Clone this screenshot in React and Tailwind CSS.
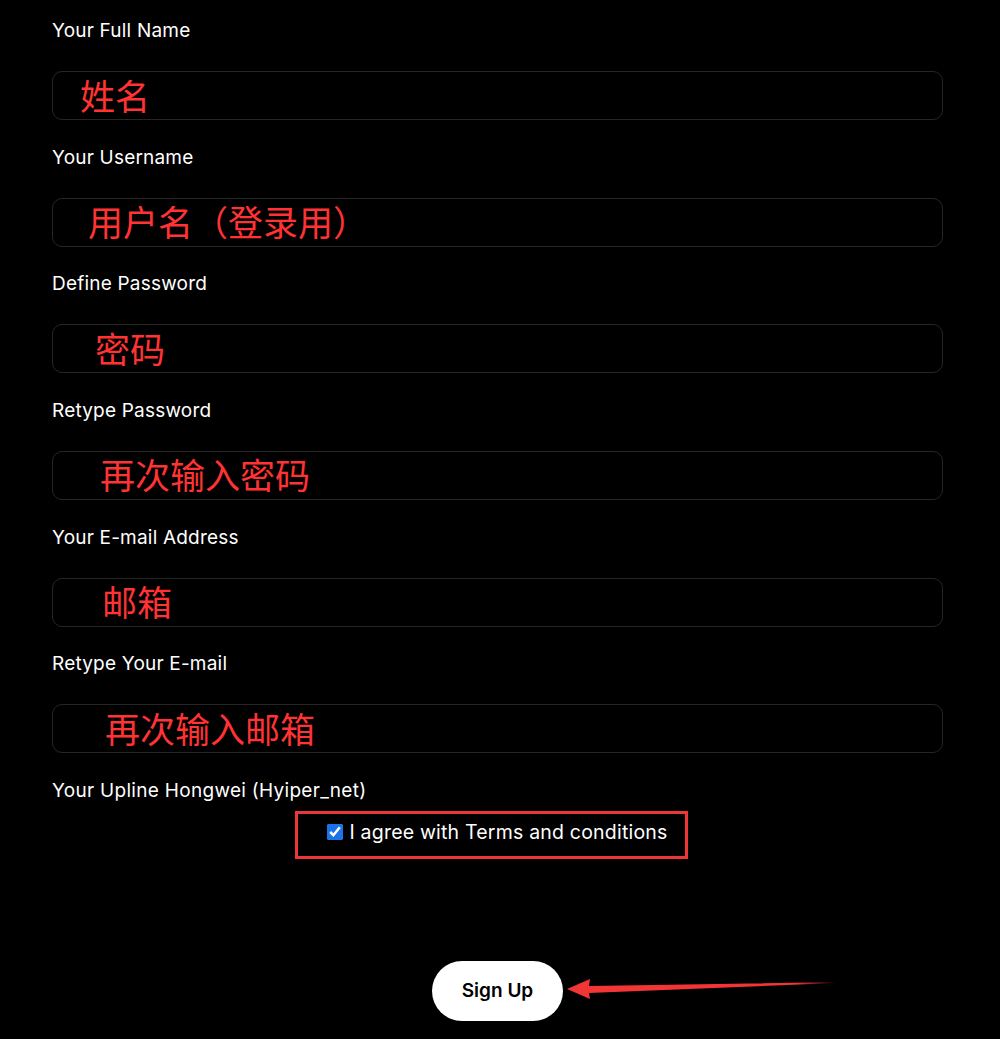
import React from 'react';

const fields = [
  { label: 'Your Full Name', hint: '姓名', indent: 'pl-[27px]' },
  { label: 'Your Username', hint: '用户名（登录用）', indent: 'pl-[35px]' },
  { label: 'Define Password', hint: '密码', indent: 'pl-[42px]' },
  { label: 'Retype Password', hint: '再次输入密码', indent: 'pl-[47px]' },
  { label: 'Your E-mail Address', hint: '邮箱', indent: 'pl-[49px]' },
  { label: 'Retype Your E-mail', hint: '再次输入邮箱', indent: 'pl-[52px]' },
];

function Field({ label, hint, indent }) {
  return (
    <div className="flex flex-col">
      <label className="h-[24px] leading-[24px] text-[19px] tracking-[0.2px] text-white">{label}</label>
      <div
        className={`mt-[28px] mb-[25.67px] h-[49px] rounded-[10px] border border-[#262626] flex items-center ${indent}`}
      >
        <span
          className="text-[35px] leading-none text-[#ff3333] pb-[3px]"
          style={{ fontFamily: '"Noto Sans CJK SC", sans-serif' }}
        >
          {hint}
        </span>
      </div>
    </div>
  );
}

export default function App() {
  return (
    <div
      className="min-h-[1039px] w-full bg-black text-white"
      style={{ fontFamily: 'Inter, "Noto Sans", sans-serif' }}
    >
      <div className="px-[52px] pt-[19px] w-[995px]">
        {fields.map((f) => (
          <Field key={f.label} {...f} />
        ))}

        <p className="h-[24px] leading-[24px] text-[19px] tracking-[0.3px]">Your Upline Hongwei (Hyiper_net)</p>

        <div className="relative mt-[8px] h-[47px] flex items-center justify-center">
          <label className="flex items-center gap-[6px] pb-[4px] text-[19.5px] tracking-[0.2px]">
            <input type="checkbox" checked readOnly className="w-4 h-4 accent-[#1a73e8]" />
            <span>I agree with Terms and conditions</span>
          </label>
          <div className="absolute left-[243px] top-0 w-[393px] h-[48px] border-[3px] border-[#ee3636]" />
        </div>

        <div className="relative mt-[103px] flex justify-center">
          <button className="h-[60px] w-[131px] rounded-full bg-white text-black text-[19px] font-semibold">
            Sign Up
          </button>
          <svg
            className="absolute left-[513px] top-[16px]"
            width="275"
            height="26"
            viewBox="0 0 275 26"
          >
            <defs>
              <linearGradient id="fade" x1="0" x2="1" y1="0" y2="0">
                <stop offset="0" stopColor="#f23535" />
                <stop offset="0.85" stopColor="#f23535" />
                <stop offset="1" stopColor="#f23535" stopOpacity="0" />
              </linearGradient>
            </defs>
            <path
              d="M2 12 L25 2 L24 9 L272 5 L272 6 L24 16 L25 22 Z"
              fill="url(#fade)"
            />
          </svg>
        </div>
      </div>
    </div>
  );
}
